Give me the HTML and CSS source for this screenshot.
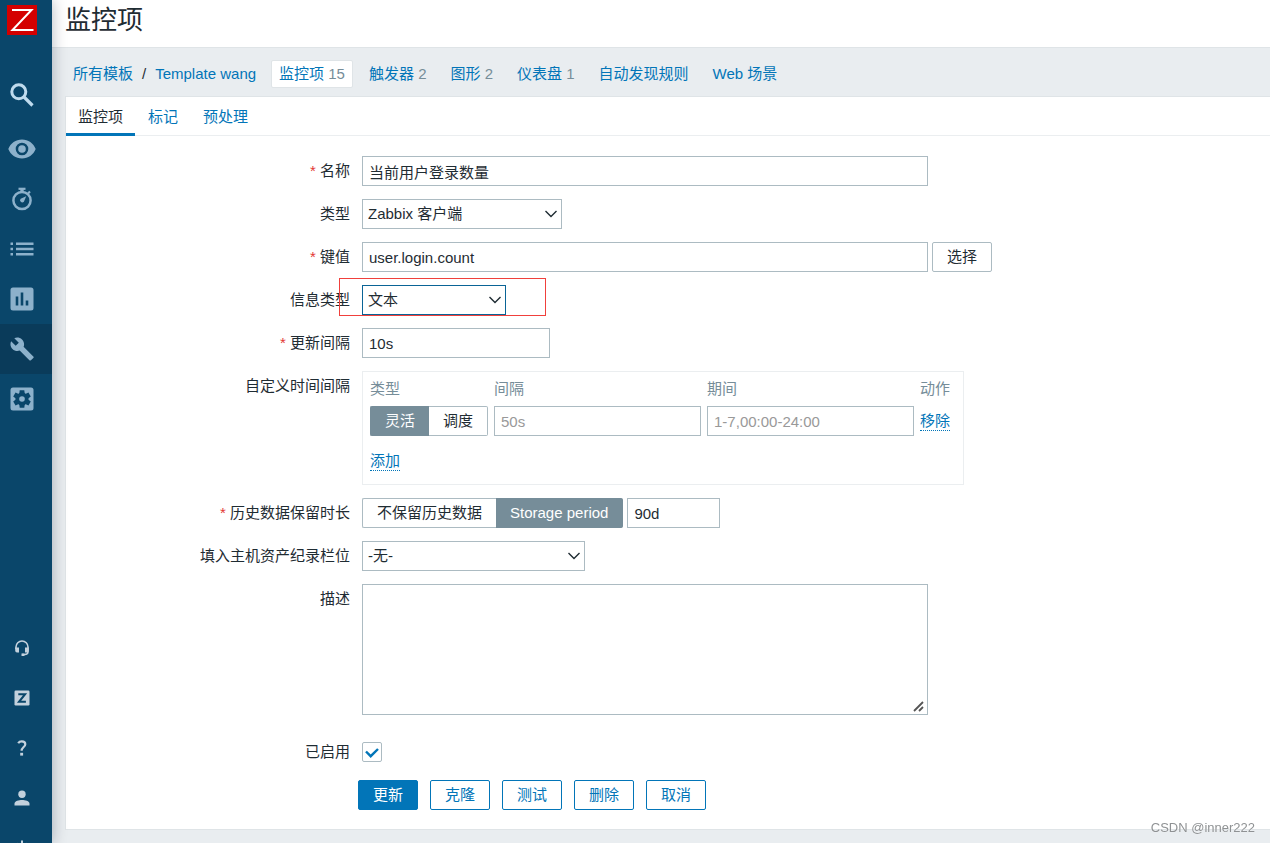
FILE: index.html
```html
<!DOCTYPE html>
<html lang="zh-CN">
<head>
<meta charset="utf-8">
<meta name="viewport" content="width=device-width, initial-scale=1">
<title>监控项</title>
<link rel="stylesheet" href="styles.css">
</head>
<body>
<div class="layout">
  <aside class="sidebar">
    <a class="logo" href="#" aria-label="Zabbix">
      <svg viewBox="0 0 30 30" width="30" height="30"><path fill="#d40000" d="M0 0h30v30H0z"/><path fill="none" stroke="#fff" stroke-width="2" d="M5 5h19.500L5.500 25H26.500"/></svg>
    </a>
    <button class="side-item side-search" type="button" aria-label="搜索">
      <svg viewBox="0 0 24 24" width="24" height="24"><circle cx="8.800" cy="8.800" r="7" fill="none" stroke="currentColor" stroke-width="3"/><path d="M14 14l8.500 8.500" stroke="currentColor" stroke-width="3.200"/></svg>
    </button>
    <nav class="side-main">
      <a class="side-item" href="#" aria-label="监测"><svg viewBox="0 0 28 20" width="28" height="20"><path fill="currentColor" fill-rule="evenodd" d="M14 .5C7.800.5 2.600 4.300.3 10c2.300 5.700 7.500 9.500 13.700 9.500S25.400 15.700 27.700 10C25.400 4.300 20.200.5 14 .5zm0 15.800a6.300 6.300 0 1 1 0-12.600 6.300 6.300 0 0 1 0 12.600z"/><circle cx="14" cy="10" r="3.800" fill="currentColor"/></svg></a>
      <a class="side-item" href="#" aria-label="服务"><svg viewBox="0 0 24 24" width="24" height="24"><g fill="none" stroke="currentColor"><circle cx="12" cy="13.500" r="8.600" stroke-width="2.500"/><path d="M8.500 1.800h7" stroke-width="2.200"/><path d="M12 2v4" stroke-width="3.400"/><path d="M18 6.500l2-2" stroke-width="2.200"/></g><path fill="currentColor" d="M16.200 9.200l-2.300 5.600a2.200 2.200 0 1 1-3.200-3.100z"/></svg></a>
      <a class="side-item" href="#" aria-label="资产记录"><svg viewBox="0 0 24 24" width="24" height="24"><path fill="currentColor" d="M.5 5.500H3V8H.5zM6 5.500h17.500V8H6zM.5 10.800H3v2.500H.5zM6 10.800h17.500v2.500H6zM.5 16H3v2.500H.5zM6 16h17.500v2.500H6z"/></svg></a>
      <a class="side-item" href="#" aria-label="报表"><svg viewBox="0 0 24 24" width="24" height="24"><path fill="currentColor" fill-rule="evenodd" d="M3 .5h18A2.500 2.500 0 0 1 23.500 3v18a2.500 2.500 0 0 1-2.500 2.500H3A2.500 2.500 0 0 1 .5 21V3A2.500 2.500 0 0 1 3 .5zM5.700 9.500v9h2.600v-9zM10.700 5.500v13h2.600v-13zM15.700 13.500v5h2.600v-5z"/></svg></a>
      <a class="side-item side-active" href="#" aria-label="配置"><svg viewBox="0 0 24 24" width="24" height="24"><path fill="currentColor" d="M23.300 19.500l-9.700-9.700c1-2.400.4-5.200-1.600-7.200C9.900.5 6.800.1 4.300 1.200l4.500 4.500-3.100 3.100L1.100 4.300C-.1 6.800.4 9.900 2.500 12c2 2 4.800 2.500 7.200 1.600l9.700 9.700c.4.4 1.100.4 1.500 0l2.400-2.400c.5-.4.5-1.100 0-1.400z"/></svg></a>
      <a class="side-item" href="#" aria-label="管理"><svg viewBox="0 0 24 24" width="24" height="24"><rect x=".5" y=".5" width="23" height="23" rx="2.500" fill="currentColor"/><g fill="#0a466a"><circle cx="12" cy="12" r="6.500"/><path d="M9.700 3.200h4.600l.5 4H9.200zM9.700 20.800h4.600l.5-4H9.200z"/><path d="M9.700 3.200h4.600l.5 4H9.200zM9.700 20.800h4.600l.5-4H9.200z" transform="rotate(60 12 12)"/><path d="M9.700 3.200h4.600l.5 4H9.200zM9.700 20.800h4.600l.5-4H9.200z" transform="rotate(120 12 12)"/></g><circle cx="12" cy="12" r="2.800" fill="currentColor"/></svg></a>
    </nav>
    <nav class="side-bottom">
      <a class="side-item" href="#" aria-label="支持"><svg viewBox="0 0 16 16" width="16" height="16"><path fill="none" stroke="currentColor" stroke-width="1.600" d="M2 9V7a6 6 0 0 1 12 0v4.500c0 2-1.300 3-3.300 3H8"/><path fill="currentColor" d="M1.200 7.500H5v5H3a1.800 1.800 0 0 1-1.800-1.800zM11 7.500h3.800v3.200a1.800 1.800 0 0 1-1.800 1.800h-2zM7.500 13.500h3V16h-3z"/></svg></a>
      <a class="side-item" href="#" aria-label="Zabbix Share"><svg viewBox="0 0 16 16" width="16" height="16"><rect x=".5" y=".5" width="15" height="15" rx="1.200" fill="currentColor"/><path fill="none" stroke="#0a466a" stroke-width="2" d="M4.300 4.200h6.800L5 11.800h6.900"/></svg></a>
      <a class="side-item" href="#" aria-label="帮助"><svg viewBox="0 0 16 16" width="16" height="16"><path fill="none" stroke="currentColor" stroke-width="2.200" d="M4.200 3.300C5 1.900 6.300 1.400 7.800 1.400c2.200 0 3.500 1 3.500 2.800 0 2.700-3.700 3-3.700 6.600"/><path fill="currentColor" d="M6.200 12.800h2.900v2.800H6.200z"/></svg></a>
      <a class="side-item" href="#" aria-label="用户"><svg viewBox="0 0 16 16" width="16" height="16"><circle cx="8" cy="4.200" r="3.700" fill="currentColor"/><path fill="currentColor" d="M.5 15.500v-1.800C.5 11 5 10 8 10s7.500 1 7.500 3.700v1.800z"/></svg></a>
      <a class="side-item" href="#" aria-label="退出"><svg viewBox="0 0 16 16" width="16" height="16"><path fill="none" stroke="currentColor" stroke-width="2" d="M8 .5V8M4.500 3.500a6 6 0 1 0 7 0"/></svg></a>
    </nav>
  </aside>

  <div class="page">
    <header class="page-header"><h1>监控项</h1></header>
    <nav class="subnav">
      <div class="crumbs"><a href="#">所有模板</a><span>/</span><a href="#">Template wang</a></div>
      <div class="links">
        <a class="link-current" href="#">监控项 <span class="count">15</span></a>
        <a href="#">触发器 <span class="count">2</span></a>
        <a href="#">图形 <span class="count">2</span></a>
        <a href="#">仪表盘 <span class="count">1</span></a>
        <a href="#">自动发现规则</a>
        <a href="#">Web 场景</a>
      </div>
    </nav>

    <main class="card">
      <nav class="tabs">
        <a class="tab-current" href="#">监控项</a>
        <a href="#">标记</a>
        <a href="#">预处理</a>
      </nav>
      <form class="form">
        <div class="row">
          <label class="label required" for="name">名称</label>
          <div class="field"><input class="text wide" id="name" type="text" value="当前用户登录数量"></div>
        </div>
        <div class="row">
          <label class="label" for="type">类型</label>
          <div class="field">
            <div class="select select-type"><select id="type"><option>Zabbix 客户端</option></select><svg viewBox="0 0 12 8" width="12" height="8"><path d="M.5 1l5.500 5.500L11.500 1"/></svg></div>
          </div>
        </div>
        <div class="row">
          <label class="label required" for="key">键值</label>
          <div class="field"><input class="text wide" id="key" type="text" value="user.login.count"><button class="btn btn-grey" type="button">选择</button></div>
        </div>
        <div class="row">
          <label class="label" for="info">信息类型</label>
          <div class="field">
            <div class="select select-info"><select id="info"><option>文本</option></select><svg viewBox="0 0 12 8" width="12" height="8"><path d="M.5 1l5.500 5.500L11.500 1"/></svg></div>
            <div class="marker"></div>
          </div>
        </div>
        <div class="row">
          <label class="label required" for="delay">更新间隔</label>
          <div class="field"><input class="text medium" id="delay" type="text" value="10s"></div>
        </div>
        <div class="row">
          <span class="label">自定义时间间隔</span>
          <div class="field">
            <div class="intervals">
              <table>
                <thead><tr><th>类型</th><th>间隔</th><th>期间</th><th>动作</th></tr></thead>
                <tbody><tr>
                  <td><div class="segment">
                    <input type="radio" name="kind" id="kind-flex" checked><label for="kind-flex">灵活</label>
                    <input type="radio" name="kind" id="kind-sched"><label for="kind-sched">调度</label>
                  </div></td>
                  <td><input class="text cell" type="text" placeholder="50s" aria-label="间隔"></td>
                  <td><input class="text cell" type="text" placeholder="1-7,00:00-24:00" aria-label="期间"></td>
                  <td><button class="btn-link" type="button">移除</button></td>
                </tr></tbody>
              </table>
              <div class="add"><button class="btn-link" type="button">添加</button></div>
            </div>
          </div>
        </div>
        <div class="row">
          <label class="label required" for="history">历史数据保留时长</label>
          <div class="field">
            <div class="segment">
              <input type="radio" name="keep" id="keep-no"><label for="keep-no">不保留历史数据</label>
              <input type="radio" name="keep" id="keep-yes" checked><label for="keep-yes">Storage period</label>
            </div>
            <input class="text small" id="history" type="text" value="90d">
          </div>
        </div>
        <div class="row">
          <label class="label" for="inventory">填入主机资产纪录栏位</label>
          <div class="field">
            <div class="select select-inventory"><select id="inventory"><option>-无-</option></select><svg viewBox="0 0 12 8" width="12" height="8"><path d="M.5 1l5.500 5.500L11.500 1"/></svg></div>
          </div>
        </div>
        <div class="row row-description">
          <label class="label" for="description">描述</label>
          <div class="field"><textarea class="text wide" id="description"></textarea></div>
        </div>
        <div class="row">
          <label class="label" for="enabled">已启用</label>
          <div class="field">
            <div class="check"><input id="enabled" type="checkbox" checked><svg viewBox="0 0 14 10" width="14" height="10"><path d="M1 3.500l4.700 4.700L13 1"/></svg></div>
          </div>
        </div>
        <div class="actions">
          <button class="btn btn-primary" type="submit">更新</button>
          <button class="btn" type="button">克隆</button>
          <button class="btn" type="button">测试</button>
          <button class="btn" type="button">删除</button>
          <button class="btn" type="button">取消</button>
        </div>
      </form>
    </main>
  </div>
</div>
<div class="watermark">CSDN @inner222</div>
</body>
</html>
```

FILE: styles.css
```css
* {
  box-sizing: border-box;
}

body {
  margin: 0;
  background: #e9edf0;
  color: #1f2c33;
  font: 15px/20px "Liberation Sans", Arial, "Noto Sans CJK SC", sans-serif;
}

a {
  color: #0275b8;
  text-decoration: none;
}

button,
input,
select,
textarea {
  font: inherit;
  color: inherit;
}

.layout {
  display: flex;
  align-items: flex-start;
}

/* Sidebar */
.sidebar {
  position: sticky;
  top: 0;
  z-index: 2;
  flex: 0 0 52px;
  display: flex;
  flex-direction: column;
  height: 100vh;
  background: #0a466a;
  box-shadow: 0 0 14px rgba(0, 20, 40, 0.3);
  clip-path: inset(0 -16px 0 0);
}

.logo {
  height: 70px;
  padding: 5px 7px;
}

.logo svg {
  display: block;
}

.side-item {
  display: flex;
  align-items: center;
  justify-content: center;
  width: 52px;
  height: 50px;
  padding: 0 8px 0 0;
  border: 0;
  background: none;
  color: #8db1cb;
}

.side-search {
  flex: none;
  margin-bottom: 4px;
  color: #bfdbee;
}

.side-active {
  background: #0a3b5a;
}

.side-bottom {
  margin-top: auto;
  margin-bottom: -30px;
}

.side-bottom .side-item {
  color: #c3d1dd;
}

/* Page head */
.page {
  flex: 1;
  min-width: 0;
}

.page-header {
  height: 48px;
  padding-left: 13px;
  border-bottom: 1px solid #dfe4e7;
  background: #fff;
}

h1 {
  margin: 0;
  font-size: 26px;
  font-weight: 400;
  line-height: 40px;
}

.subnav {
  display: flex;
  align-items: center;
  gap: 15px;
  height: 48px;
  padding: 4px 0 0 21px;
  white-space: nowrap;
}

.crumbs {
  display: flex;
  gap: 9px;
}

.links {
  display: flex;
  gap: 8px;
}

.links a {
  padding: 3px 7px;
  border: 1px solid transparent;
  border-radius: 2px;
}

.links .link-current {
  border-color: #dfe4e7;
  background: #fff;
}

.count {
  color: #768d99;
}

/* Card and tabs */
.card {
  margin-left: 13px;
  border: 1px solid #dfe4e7;
  border-right: 0;
  background: #fff;
}

.tabs {
  display: flex;
  gap: 1px;
  height: 39px;
  border-bottom: 1px solid #ebeef0;
}

.tabs a {
  height: 39px;
  padding: 0 12px;
  line-height: 39px;
}

.tabs .tab-current {
  border-bottom: 3px solid #0275b8;
  color: #1f2c33;
}

/* Form */
.form {
  display: flex;
  flex-direction: column;
  gap: 13px;
  padding: 20px 0 19px;
}

.row {
  display: grid;
  grid-template-columns: 284px 1fr;
  gap: 12px;
}

.row-description {
  padding-bottom: 9px;
}

.label {
  line-height: 30px;
  text-align: right;
}

.required::before {
  content: "* ";
  color: #e33734;
}

.field {
  position: relative;
  display: flex;
  align-items: center;
  gap: 4px;
  min-height: 30px;
}

.text {
  height: 30px;
  padding: 0 6px;
  border: 1px solid #acbbc2;
  border-radius: 0;
  background: #fff;
}

.text::placeholder {
  color: #999;
}

.wide {
  width: 566px;
}

.medium {
  width: 188px;
}

.small {
  width: 93px;
}

.cell {
  display: block;
  width: 207px;
}

textarea.text {
  display: block;
  height: 131px;
  resize: both;
}

textarea::-webkit-resizer {
  background: url("data:image/svg+xml,%3Csvg xmlns='http://www.w3.org/2000/svg' viewBox='0 0 15 15'%3E%3Cpath d='M2 12L11 3M7 12l4-4' fill='none' stroke='%23555' stroke-width='1.800'/%3E%3C/svg%3E") center / 15px 15px no-repeat;
}

.select {
  position: relative;
}

.select select {
  width: 100%;
  height: 30px;
  padding: 0 5px;
  border: 1px solid #acbbc2;
  border-radius: 0;
  background: #fff;
  appearance: none;
}

.select svg {
  position: absolute;
  top: 11px;
  right: 5px;
  fill: none;
  stroke: #1f2c33;
  stroke-width: 1.4;
  pointer-events: none;
}

.select-type {
  width: 200px;
}

.select-info {
  width: 144px;
}

.select-info select {
  border-color: #0a6496;
}

.select-inventory {
  width: 223px;
}

.marker {
  position: absolute;
  top: -7px;
  left: -23px;
  width: 207px;
  height: 38px;
  border: 1px solid #f0403c;
  pointer-events: none;
}

.segment {
  display: flex;
}

.segment input {
  position: absolute;
  opacity: 0;
}

.segment label {
  height: 30px;
  padding: 0 14px;
  border: 1px solid #acbbc2;
  line-height: 28px;
}

.segment label:first-of-type {
  border-right: 0;
  border-radius: 2px 0 0 2px;
}

.segment label:last-of-type {
  border-left: 0;
  border-radius: 0 2px 2px 0;
}

.segment input:checked + label {
  border-color: #768d99;
  background: #768d99;
  color: #fff;
}

.intervals {
  padding: 0 13px 8px 7px;
  border: 1px solid #ebeef0;
}

.intervals table {
  border-collapse: collapse;
}

.intervals th {
  height: 34px;
  padding: 0;
  color: #768d99;
  font-weight: 400;
  text-align: left;
}

.intervals td {
  padding: 0 6px 0 0;
}

.intervals th:last-child,
.intervals td:last-child {
  padding: 0;
}

.btn-link {
  padding: 0;
  border: 0;
  border-bottom: 1px dotted #0275b8;
  background: none;
  color: #0275b8;
  line-height: 18px;
}

.add {
  display: flex;
  align-items: center;
  height: 30px;
  margin-top: 10px;
}

.check {
  position: relative;
  width: 20px;
  height: 20px;
}

.check input {
  display: block;
  width: 20px;
  height: 20px;
  margin: 0;
  border: 1px solid #acbbc2;
  border-radius: 2px;
  background: #fff;
  appearance: none;
}

.check svg {
  position: absolute;
  top: 6px;
  left: 3px;
  fill: none;
  stroke: #0275b8;
  stroke-width: 2.4;
  pointer-events: none;
  visibility: hidden;
}

.check input:checked + svg {
  visibility: visible;
}

.actions {
  display: flex;
  gap: 12px;
  padding-left: 292px;
}

.btn {
  height: 30px;
  padding: 0 14px;
  border: 1px solid #0275b8;
  border-radius: 2px;
  background: #fff;
  color: #0275b8;
}

.btn-primary {
  background: #0275b8;
  color: #fff;
}

.btn-grey {
  border-color: #acbbc2;
  color: #1f2c33;
}

.watermark {
  position: fixed;
  right: 15px;
  bottom: 5px;
  color: #8f9294;
  font-size: 13px;
  text-shadow: 0 0 1px #fff;
}
```
